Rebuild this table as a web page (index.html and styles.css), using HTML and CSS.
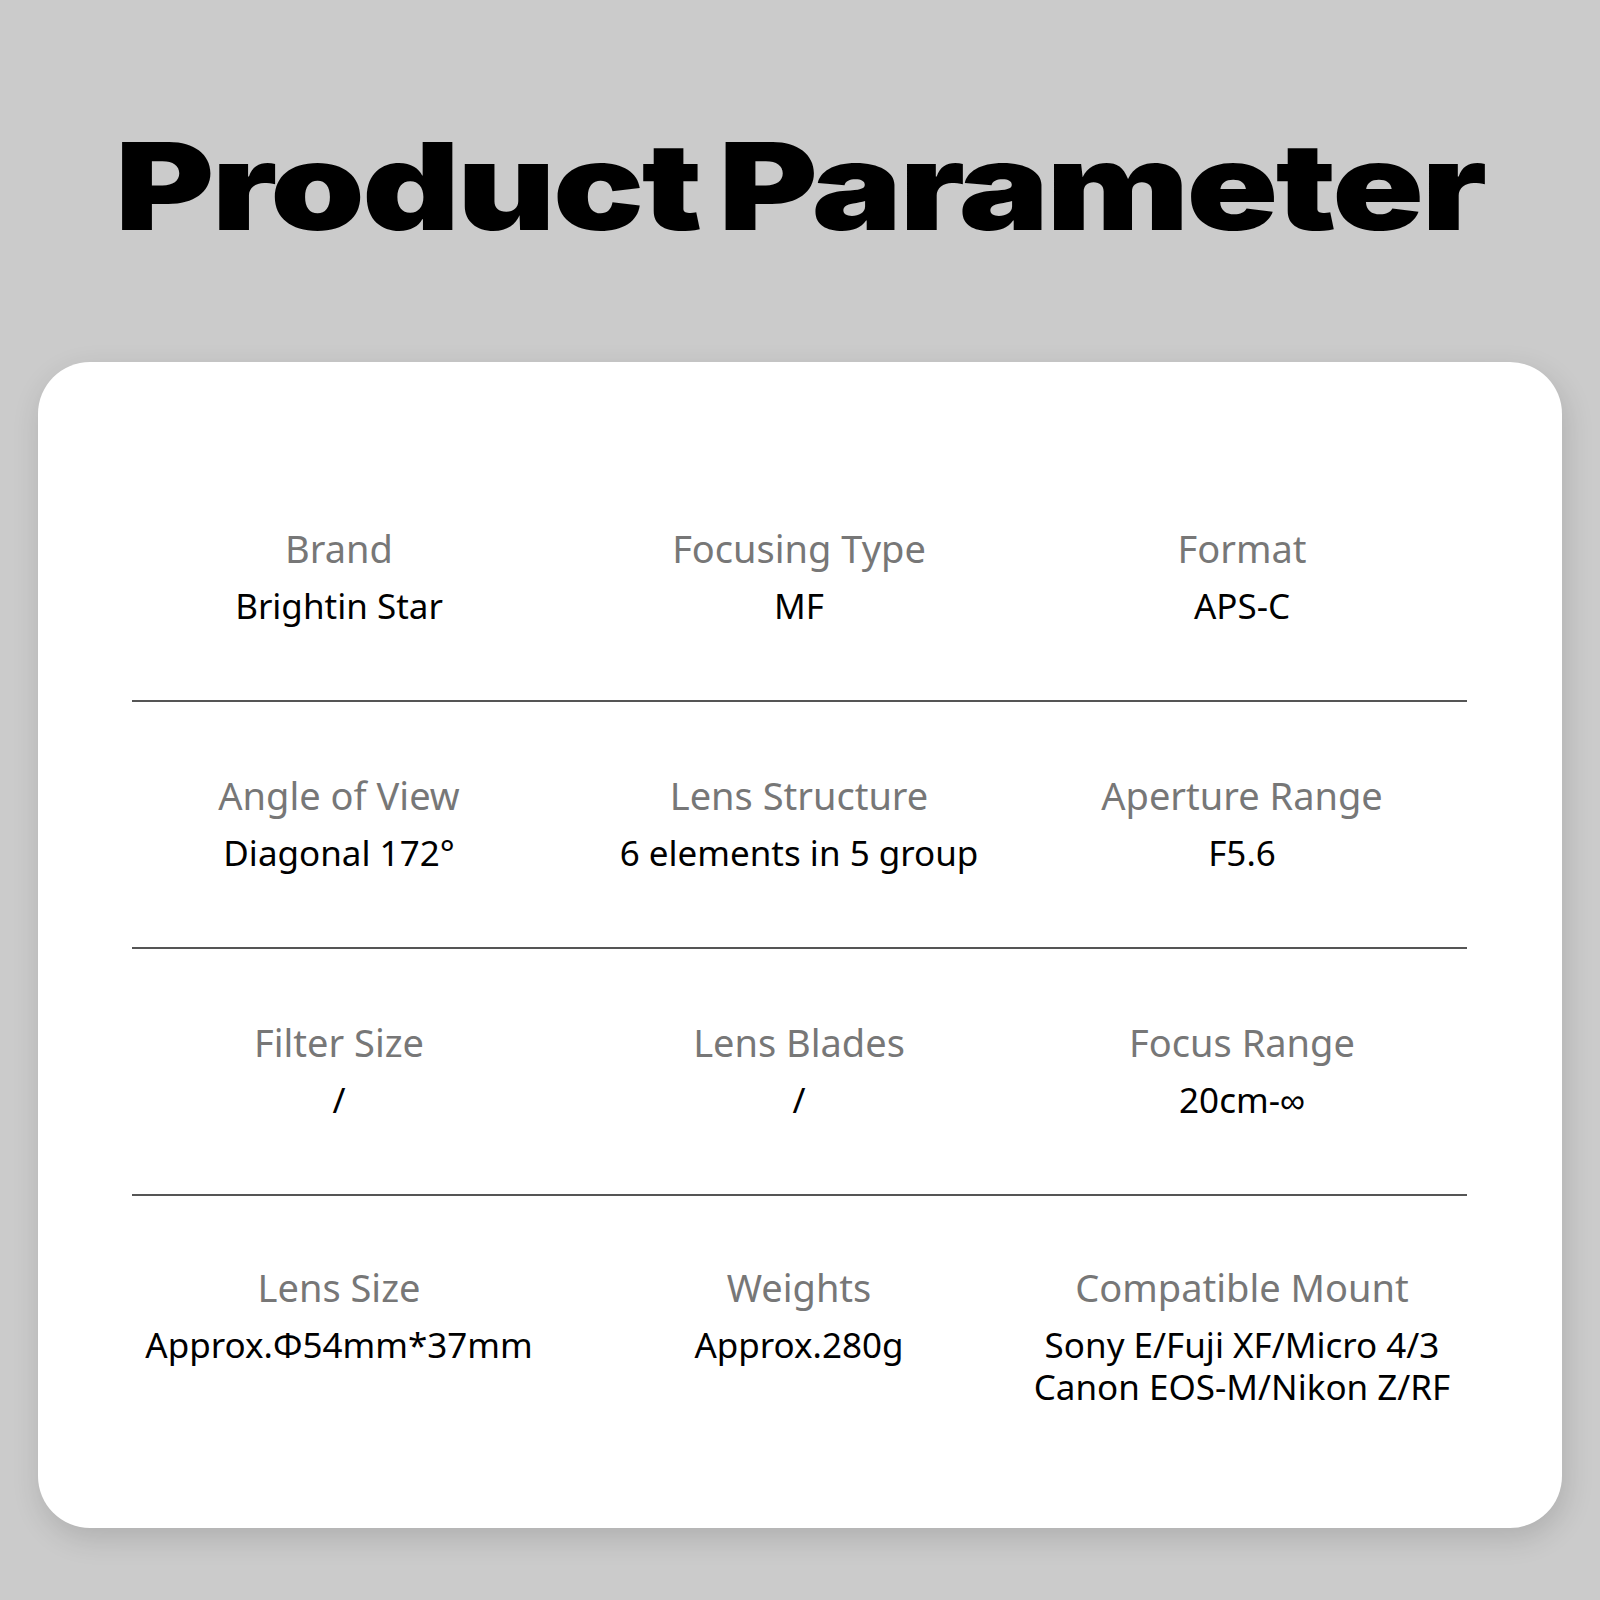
FILE: index.html
```html
<!DOCTYPE html>
<html lang="en">
<head>
<meta charset="utf-8">
<title>Product Parameter</title>
<link rel="stylesheet" href="styles.css">
</head>
<body>
<div class="page">
  <div class="title-wrap"><h1 class="title">Product Parameter</h1></div>
  <div class="card">
    <div class="row">
      <div class="cell"><div class="label">Brand</div><div class="value">Brightin Star</div></div>
      <div class="cell"><div class="label">Focusing Type</div><div class="value">MF</div></div>
      <div class="cell"><div class="label">Format</div><div class="value">APS-C</div></div>
    </div>
    <div class="row">
      <div class="cell"><div class="label">Angle of View</div><div class="value">Diagonal 172°</div></div>
      <div class="cell"><div class="label">Lens Structure</div><div class="value">6 elements in 5 group</div></div>
      <div class="cell"><div class="label">Aperture Range</div><div class="value">F5.6</div></div>
    </div>
    <div class="row">
      <div class="cell"><div class="label">Filter Size</div><div class="value">/</div></div>
      <div class="cell"><div class="label">Lens Blades</div><div class="value">/</div></div>
      <div class="cell"><div class="label">Focus Range</div><div class="value">20cm-∞</div></div>
    </div>
    <div class="row last">
      <div class="cell"><div class="label">Lens Size</div><div class="value">Approx.Φ54mm*37mm</div></div>
      <div class="cell"><div class="label">Weights</div><div class="value">Approx.280g</div></div>
      <div class="cell"><div class="label">Compatible Mount</div><div class="value">Sony E/Fuji XF/Micro 4/3</div><div class="value second">Canon EOS-M/Nikon Z/RF</div></div>
    </div>
  </div>
</div>
</body>
</html>
```

FILE: styles.css
```css
html, body {
  margin: 0;
  padding: 0;
}
body {
  background: #cbcbcb;
  width: 1600px;
  height: 1600px;
  overflow: hidden;
}
.page {
  padding-top: 116px;
}
.title-wrap {
  display: flex;
  justify-content: center;
}
.title {
  display: inline-block;
  margin: 0;
  font-family: "Inter", sans-serif;
  font-weight: 900;
  font-size: 121px;
  line-height: 140px;
  letter-spacing: -2px;
  word-spacing: -7px;
  color: #000;
  white-space: nowrap;
  transform: scaleX(1.25);
}
.card {
  margin: 106px 38px 0 38px;
  background: #fff;
  border-radius: 52px;
  padding: 93px 95px 47px 94px;
  box-shadow: 3px 10px 30px rgba(0,0,0,0.14);
}
.row {
  display: grid;
  grid-template-columns: 414px 506px 380px;
  padding: 68px 0 73px 0;
  border-bottom: 2px solid #555;
}
.row.last {
  border-bottom: none;
  padding-top: 66px;
}
.cell {
  display: flex;
  flex-direction: column;
  align-items: center;
  text-align: center;
  font-family: "Noto Sans", sans-serif;
  white-space: nowrap;
}
.label {
  font-size: 38px;
  line-height: 50px;
  color: #777;
}
.value {
  margin-top: 12px;
  font-size: 35px;
  line-height: 42px;
  color: #000;
}
.value.second {
  margin-top: 0;
}
```
